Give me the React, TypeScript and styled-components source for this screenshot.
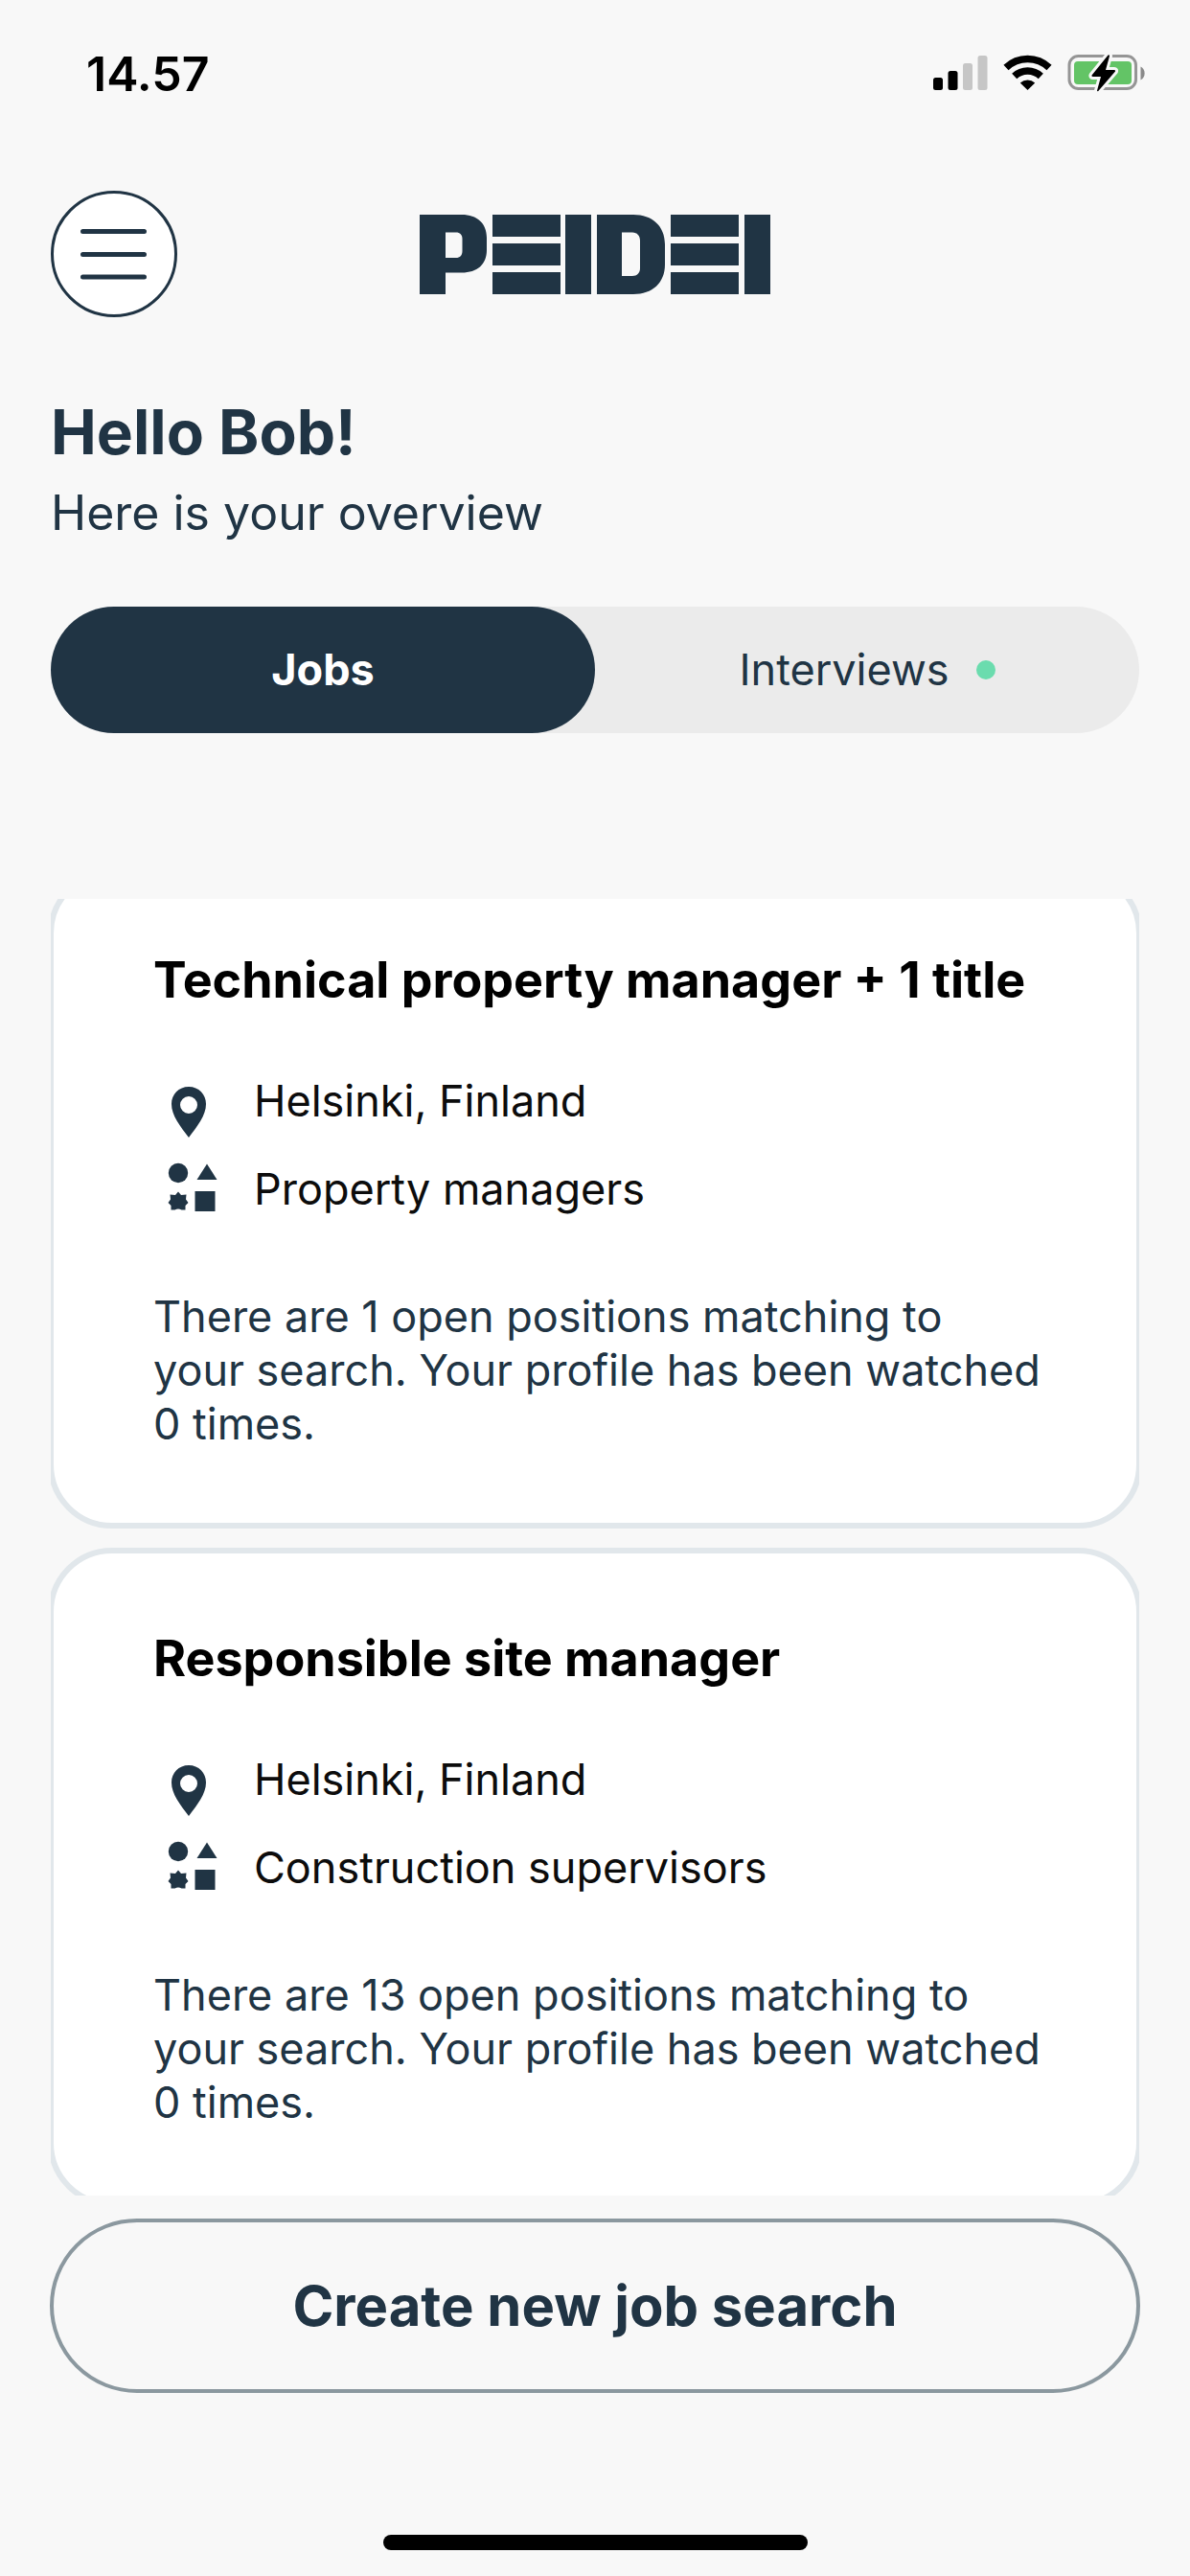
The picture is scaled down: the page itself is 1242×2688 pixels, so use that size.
import React, { useLayoutEffect, useRef, useState } from "react";
import styled, { createGlobalStyle, css } from "styled-components";

const ink = "#203444";
const paper = "#f8f8f8";
const cardEdge = "#e1e7eb";

const GlobalStyle = createGlobalStyle`
  *, *::before, *::after { box-sizing: border-box; }
  body {
    margin: 0;
    background: ${paper};
    color: ${ink};
    font-family: Inter, "Liberation Sans", sans-serif;
  }
  h1, h2, p, ul { margin: 0; padding: 0; }
  button { font: inherit; color: inherit; cursor: pointer; }
`;

const Screen = styled.div`
  display: flex;
  flex-direction: column;
  height: 100vh;
  background: ${paper};
`;

const StatusBar = styled.div`
  display: flex;
  align-items: center;
  justify-content: space-between;
  height: 153px;
  flex: none;
  padding: 0 46px 0 90px;
`;

const Clock = styled.time`
  font-size: 50px;
  line-height: 56px;
  font-weight: 600;
  color: #000;
`;

const Header = styled.header`
  display: grid;
  grid-template-columns: 1fr auto 1fr;
  align-items: center;
  padding: 46px 53px 0;
  flex: none;
`;

const MenuButton = styled.button`
  display: grid;
  place-items: center;
  width: 132px;
  height: 132px;
  padding: 0;
  border: 3px solid ${ink};
  border-radius: 50%;
  background: #fff;
`;

const Main = styled.main`
  display: flex;
  flex-direction: column;
  flex: 1;
  min-height: 0;
  padding: 80px 53px 0;
`;

const Greeting = styled.h1`
  font-size: 64px;
  line-height: 80px;
  font-weight: 700;
`;

const Subtitle = styled.p`
  margin-top: 12px;
  font-size: 50px;
  line-height: 64px;
`;

const Tabs = styled.div`
  display: grid;
  grid-template-columns: 1fr 1fr;
  flex: none;
  margin-top: 66px;
  border-radius: 66px;
  background: #ebebeb;
`;

const Tab = styled.button<{ $active: boolean }>`
  display: flex;
  align-items: center;
  justify-content: center;
  gap: 28px;
  height: 132px;
  padding: 0;
  border: 0;
  border-radius: 66px;
  background: transparent;
  font-size: 45px;
  line-height: 56px;
  ${({ $active }) =>
    $active &&
    css`
      background: ${ink};
      color: #fff;
      font-weight: 700;
    `}
`;

const Dot = styled.span`
  width: 20px;
  height: 20px;
  border-radius: 50%;
  background: #6bdcae;
`;

const CardList = styled.div`
  display: flex;
  flex-direction: column;
  gap: 20px;
  flex: 1;
  min-height: 0;
  margin-top: 173px;
  overflow-x: hidden;
  overflow-y: auto;
  scrollbar-width: none;
`;

const Card = styled.article`
  flex: none;
  margin: 0 -3px;
  padding: 78px 100px 75px 104px;
  border: 6px solid ${cardEdge};
  border-radius: 67px;
  background: #fff;
`;

const CardTitle = styled.h2`
  font-size: 52px;
  line-height: 64px;
  font-weight: 700;
  color: #000;
`;

const Facts = styled.ul`
  display: flex;
  flex-direction: column;
  gap: 20px;
  margin-top: 66px;
  padding-left: 12px;
  list-style: none;
`;

const Fact = styled.li`
  display: flex;
  gap: 33px;
  font-size: 45px;
  line-height: 56px;
  color: #0c0c0c;
`;

const Summary = styled.p`
  margin-top: 77px;
  font-size: 45px;
  line-height: 56px;
`;

const Footer = styled.footer`
  display: flex;
  flex-direction: column;
  align-items: center;
  flex: none;
  padding: 24px 52px 27px;
`;

const CreateButton = styled.button`
  width: 100%;
  height: 182px;
  border: 4px solid #8b989f;
  border-radius: 91px;
  background: transparent;
  font-size: 58px;
  line-height: 72px;
  font-weight: 700;
`;

const HomeIndicator = styled.div`
  width: 443px;
  height: 16px;
  margin-top: 148px;
  border-radius: 8px;
  background: #000;
`;

function StatusIcons() {
  return (
    <svg width="222" height="42" viewBox="0 0 222 42" role="img" aria-label="Signal, Wi-Fi, battery charging">
      <rect x="0" y="25" width="10" height="13" rx="2.5" />
      <rect x="15.5" y="18" width="10" height="20" rx="2.5" />
      <rect x="31" y="10" width="10" height="28" rx="2.5" fill="#c6c6c6" />
      <rect x="46.5" y="2" width="10" height="36" rx="2.5" fill="#c6c6c6" />
      <g fill="none" stroke="#000" strokeWidth="7.4">
        <path d="M76 14.5 A32.5 32.5 0 0 1 121 14.5" />
        <path d="M84.7 23.5 A20 20 0 0 1 112.3 23.5" />
      </g>
      <path d="M98.5 38 L90.8 30.5 A11.5 11.5 0 0 1 106.2 30.5 Z" />
      <rect x="142" y="2.5" width="69.5" height="34" rx="9.5" fill="none" stroke="#959595" strokeWidth="3" />
      <path d="M216.5 13.5 C222 16 222 25 216.5 27.5 Z" fill="#8a8a8a" />
      <rect x="147" y="8" width="60" height="24" rx="4" fill="#63c466" />
      <path
        d="M182.5 1.5 L165.5 22.5 Q165 23.8 166.5 24 L175 24 L171 38.5 Q171.3 40 172.5 38.8 L190 18.5 Q190.5 17 189 17 L180 17 L184 2.5 Q183.8 0.5 182.5 1.5 Z"
        fill="#000"
        stroke={paper}
        strokeWidth="6"
        strokeLinejoin="round"
        paintOrder="stroke"
      />
    </svg>
  );
}

function MenuIcon() {
  return (
    <svg width="70" height="54" viewBox="0 0 70 54" aria-hidden="true">
      <path d="M2.5 3.5H66.5M2.5 27.5H66.5M2.5 51H66.5" stroke={ink} strokeWidth="5" strokeLinecap="round" />
    </svg>
  );
}

function Logo() {
  return (
    <svg width="366" height="83" viewBox="0 0 366 83" fill={ink} role="img" aria-label="Peidei">
      <path
        fillRule="evenodd"
        d="M0 0H44C60 0 70 9 70 24V37C70 52 60 60.5 44 60.5H27V83H0ZM27 18.5V45H38C42 45 44.5 42.5 44.5 38V25C44.5 21 42 18.5 38 18.5Z"
      />
      <path d="M76 0H147V23H76ZM76 30H147V53H76ZM76 60H147V83H76ZM152 0H179V83H152Z" />
      <path
        fillRule="evenodd"
        d="M185 0H223C243 0 256 12 256 31V52C256 71 243 83 223 83H185ZM211 18.5V64H222C227 64 230 60.5 230 56V27C230 22 227 18.5 222 18.5Z"
      />
      <path d="M262 0H333V23H262ZM262 30H333V53H262ZM262 60H333V83H262ZM339 0H366V83H339Z" />
    </svg>
  );
}

function PinIcon() {
  return (
    <svg width="60" height="72" viewBox="0 0 60 72" fill={ink} aria-hidden="true">
      <path
        fillRule="evenodd"
        d="M25 13C14.5 13 7 21 7 31C7 43 16 54 25 66C34 54 43 43 43 31C43 21 35.5 13 25 13ZM25 23A9 9 0 1 1 25 41A9 9 0 1 1 25 23Z"
      />
    </svg>
  );
}

function ShapesIcon() {
  return (
    <svg width="60" height="56" viewBox="0 0 60 56" fill={ink} aria-hidden="true">
      <circle cx="14" cy="11" r="10.2" />
      <path d="M44 1.5L54.5 18H33.5Z" />
      <path d="M14 30.5L17 34L22.5 33.5L22 38.500L24.500 42L21.500 45L21.500 49.500H17.500Q14 47.500 10.500 49.500H6.500L6.500 45L3.500 42L6 38.500L5.500 33.500L11 34Z" />
      <rect x="31.5" y="30" width="21" height="21" />
    </svg>
  );
}

type Search = { title: string; place: string; field: string; positions: number; views: number };

const searches: Search[] = [
  { title: "Technical property manager + 1 title", place: "Helsinki, Finland", field: "Property managers", positions: 1, views: 0 },
  { title: "Responsible site manager", place: "Helsinki, Finland", field: "Construction supervisors", positions: 13, views: 0 },
];

function SearchCard({ search }: { search: Search }) {
  return (
    <Card>
      <CardTitle>{search.title}</CardTitle>
      <Facts>
        <Fact>
          <PinIcon />
          {search.place}
        </Fact>
        <Fact>
          <ShapesIcon />
          {search.field}
        </Fact>
      </Facts>
      <Summary>
        {`There are ${search.positions} open positions matching to your search. Your profile has been watched ${search.views} times.`}
      </Summary>
    </Card>
  );
}

export default function App() {
  const [tab, setTab] = useState("jobs");
  const list = useRef<HTMLDivElement>(null);

  // The list opens slightly scrolled, so the first card runs under its top edge.
  useLayoutEffect(() => {
    if (list.current) list.current.scrollTop = 31;
  }, []);

  return (
    <Screen>
      <GlobalStyle />
      <StatusBar>
        <Clock>14.57</Clock>
        <StatusIcons />
      </StatusBar>
      <Header>
        <MenuButton aria-label="Open menu">
          <MenuIcon />
        </MenuButton>
        <Logo />
      </Header>
      <Main>
        <Greeting>Hello Bob!</Greeting>
        <Subtitle>Here is your overview</Subtitle>
        <Tabs role="tablist">
          <Tab role="tab" aria-selected={tab === "jobs"} $active={tab === "jobs"} onClick={() => setTab("jobs")}>
            Jobs
          </Tab>
          <Tab
            role="tab"
            aria-selected={tab === "interviews"}
            $active={tab === "interviews"}
            onClick={() => setTab("interviews")}
          >
            Interviews
            <Dot />
          </Tab>
        </Tabs>
        <CardList ref={list}>
          {searches.map((search) => (
            <SearchCard key={search.title} search={search} />
          ))}
        </CardList>
      </Main>
      <Footer>
        <CreateButton>Create new job search</CreateButton>
        <HomeIndicator />
      </Footer>
    </Screen>
  );
}
